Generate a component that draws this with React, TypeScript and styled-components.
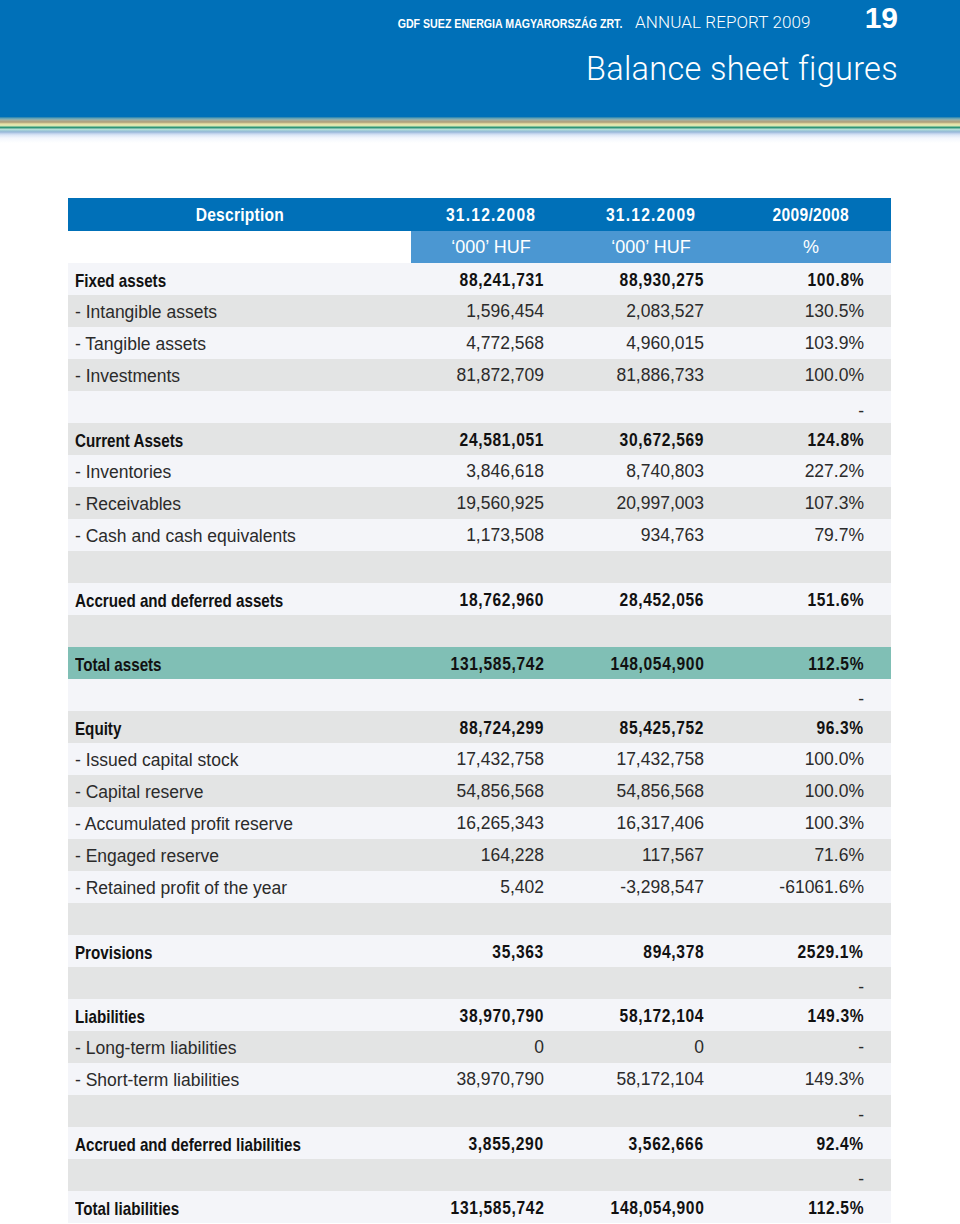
import React from "react";
import styled, { createGlobalStyle } from "styled-components";

const Global = createGlobalStyle`
  html, body { margin: 0; padding: 0; background: #ffffff; }
  body { font-family: "Liberation Sans", Arial, sans-serif; }
`;

const Page = styled.div`
  width: 960px;
  min-height: 1224px;
  background: #ffffff;
`;

const Banner = styled.header`
  height: 117px;
  background: #0070b8;
  color: #ffffff;
  display: flex;
  flex-direction: column;
  align-items: flex-end;
  padding: 0 62px 0 0;
  box-sizing: border-box;
`;

const TopLine = styled.div`
  display: flex;
  align-items: baseline;
  height: 36px;
`;

const Company = styled.span`
  font-size: 12.5px;
`;

const Report = styled.span`
  font-family: Roboto, "Liberation Sans", sans-serif;
  font-weight: 300;
  font-size: 17px;
  margin-left: 13px;
  letter-spacing: 0.1px;
`;

const PageNo = styled.span`
  font-family: "Liberation Sans", Arial, sans-serif;
  font-weight: 700;
  font-size: 30px;
  margin-left: 54px;
  line-height: 36px;
`;

const Title = styled.h1`
  margin: 13px 0 0;
  font-family: Roboto, "Liberation Sans", sans-serif;
  font-weight: 300;
  font-size: 32.5px;
  letter-spacing: 0.3px;
  line-height: 40px;
`;

const Stripes = styled.div`
  height: 26px;
  background: linear-gradient(
    to bottom,
    #1f7fae 0px,
    #7fb0b8 2px,
    #b3aa8c 4px,
    #a99a78 5px,
    #e9e2a6 7px,
    #d6e6b6 9px,
    #2f9a78 10px,
    #2e9078 11px,
    #bfe6d9 12px,
    #a6d4d8 13px,
    #94b6d6 15px,
    #b6cbe8 16px,
    #dbe6f6 18px,
    #f3f7fd 21px,
    #ffffff 26px
  );
`;

const Main = styled.main`
  padding: 55px 69px 0 68px;
`;

const Table = styled.div`
  width: 823px;
  display: flex;
  flex-direction: column;
`;

const Grid = styled.div`
  display: grid;
  grid-template-columns: 343px 160px 160px 160px;
`;

/* Condensed bold type: the reference uses a condensed grotesque, drawn here
   by narrowing Liberation Sans Bold horizontally. */
const Narrow = styled.span<{ $origin?: string; $track?: number; $scale?: number }>`
  display: inline-block;
  font-family: "Liberation Sans", Arial, sans-serif;
  font-weight: 700;
  white-space: nowrap;
  letter-spacing: ${(p) => p.$track ?? 0}px;
  transform: scaleX(${(p) => p.$scale ?? 0.82});
  transform-origin: ${(p) => p.$origin ?? "left"} center;
`;

const HeadRow = styled(Grid)`
  height: 33px;
  background: #0070b8;
  color: #ffffff;
  font-size: 19px;
  align-items: center;
  text-align: center;
`;

const HeadCell = styled.div`
  padding-top: 1px;
`;

const UnitRow = styled(Grid)`
  height: 32px;
  align-items: stretch;
`;

const UnitCell = styled.div<{ $empty?: boolean }>`
  background: ${(p) => (p.$empty ? "#ffffff" : "#4b97d2")};
  color: #ffffff;
  font-family: "Liberation Sans", Arial, sans-serif;
  font-size: 18px;
  display: flex;
  align-items: center;
  justify-content: center;
  padding-top: 1px;
`;

type Tone = "light" | "gray" | "teal";

const Row = styled(Grid)<{ $tone: Tone }>`
  height: 32px;
  align-items: center;
  background: ${(p) =>
    p.$tone === "teal" ? "#80bfb5" : p.$tone === "gray" ? "#e3e4e4" : "#f4f5f9"};
`;

const Label = styled.div<{ $bold?: boolean }>`
  padding: 3px 0 0 7px;
  font-family: "Liberation Sans", Arial, sans-serif;
  font-size: ${(p) => (p.$bold ? "18.5px" : "17.5px")};
  color: ${(p) => (p.$bold ? "#111111" : "#2b2b2b")};
  white-space: nowrap;
`;

const Value = styled.div<{ $bold?: boolean; $low?: boolean }>`
  text-align: right;
  padding: ${(p) => (p.$low ? "8px" : "1px")} 27px 0 0;
  font-family: "Liberation Sans", Arial, sans-serif;
  font-size: ${(p) => (p.$bold ? "19px" : "17.5px")};
  color: ${(p) => (p.$bold ? "#111111" : "#2b2b2b")};
  white-space: nowrap;
`;

type Item = {
  label?: string;
  values?: [string, string, string];
  bold?: boolean;
  dash?: boolean;
  total?: boolean;
};

const rows: Item[] = [
  { label: "Fixed assets", values: ["88,241,731", "88,930,275", "100.8%"], bold: true },
  { label: "- Intangible assets", values: ["1,596,454", "2,083,527", "130.5%"] },
  { label: "- Tangible assets", values: ["4,772,568", "4,960,015", "103.9%"] },
  { label: "- Investments", values: ["81,872,709", "81,886,733", "100.0%"] },
  { dash: true },
  { label: "Current Assets", values: ["24,581,051", "30,672,569", "124.8%"], bold: true },
  { label: "- Inventories", values: ["3,846,618", "8,740,803", "227.2%"] },
  { label: "- Receivables", values: ["19,560,925", "20,997,003", "107.3%"] },
  { label: "- Cash and cash equivalents", values: ["1,173,508", "934,763", "79.7%"] },
  {},
  { label: "Accrued and deferred assets", values: ["18,762,960", "28,452,056", "151.6%"], bold: true },
  {},
  { label: "Total assets", values: ["131,585,742", "148,054,900", "112.5%"], bold: true, total: true },
  { dash: true },
  { label: "Equity", values: ["88,724,299", "85,425,752", "96.3%"], bold: true },
  { label: "- Issued capital stock", values: ["17,432,758", "17,432,758", "100.0%"] },
  { label: "- Capital reserve", values: ["54,856,568", "54,856,568", "100.0%"] },
  { label: "- Accumulated profit reserve", values: ["16,265,343", "16,317,406", "100.3%"] },
  { label: "- Engaged reserve", values: ["164,228", "117,567", "71.6%"] },
  { label: "- Retained profit of the year", values: ["5,402", "-3,298,547", "-61061.6%"] },
  {},
  { label: "Provisions", values: ["35,363", "894,378", "2529.1%"], bold: true },
  { dash: true },
  { label: "Liabilities", values: ["38,970,790", "58,172,104", "149.3%"], bold: true },
  { label: "- Long-term liabilities", values: ["0", "0", "-"] },
  { label: "- Short-term liabilities", values: ["38,970,790", "58,172,104", "149.3%"] },
  { dash: true },
  { label: "Accrued and deferred liabilities", values: ["3,855,290", "3,562,666", "92.4%"], bold: true },
  { dash: true },
  { label: "Total liabilities", values: ["131,585,742", "148,054,900", "112.5%"], bold: true },
];

const toneFor = (i: number, item: Item): Tone => {
  if (item.total) return "teal";
  if (i < 12) return i % 2 === 0 ? "light" : "gray";
  return i % 2 === 1 ? "light" : "gray";
};

const Cell = ({ text, bold, low }: { text: string; bold?: boolean; low?: boolean }) => (
  <Value $bold={bold} $low={low}>
    {bold ? (
      <Narrow $origin="right" $track={0.8}>
        {text}
      </Narrow>
    ) : (
      text
    )}
  </Value>
);

export default function App() {
  return (
    <Page>
      <Global />
      <Banner>
        <TopLine>
          <Company>
            <Narrow $origin="right" $scale={0.85}>
              GDF SUEZ ENERGIA MAGYARORSZÁG ZRT.
            </Narrow>
          </Company>
          <Report>ANNUAL REPORT 2009</Report>
          <PageNo>19</PageNo>
        </TopLine>
        <Title>Balance sheet figures</Title>
      </Banner>
      <Stripes />
      <Main>
        <Table>
          <HeadRow>
            <HeadCell>
              <Narrow $origin="center" $track={0.3}>Description</Narrow>
            </HeadCell>
            <HeadCell>
              <Narrow $origin="center" $track={1.5}>31.12.2008</Narrow>
            </HeadCell>
            <HeadCell>
              <Narrow $origin="center" $track={1.5}>31.12.2009</Narrow>
            </HeadCell>
            <HeadCell>
              <Narrow $origin="center" $track={0.4}>2009/2008</Narrow>
            </HeadCell>
          </HeadRow>
          <UnitRow>
            <UnitCell $empty />
            <UnitCell>‘000’ HUF</UnitCell>
            <UnitCell>‘000’ HUF</UnitCell>
            <UnitCell>%</UnitCell>
          </UnitRow>
          {rows.map((r, i) => (
            <Row key={i} $tone={toneFor(i, r)}>
              <Label $bold={r.bold}>
                {r.bold ? <Narrow>{r.label}</Narrow> : r.label ?? ""}
              </Label>
              <Cell text={r.values?.[0] ?? ""} bold={r.bold} />
              <Cell text={r.values?.[1] ?? ""} bold={r.bold} />
              <Cell
                text={r.dash ? "-" : r.values?.[2] ?? ""}
                bold={r.bold}
                low={r.dash}
              />
            </Row>
          ))}
        </Table>
      </Main>
    </Page>
  );
}
